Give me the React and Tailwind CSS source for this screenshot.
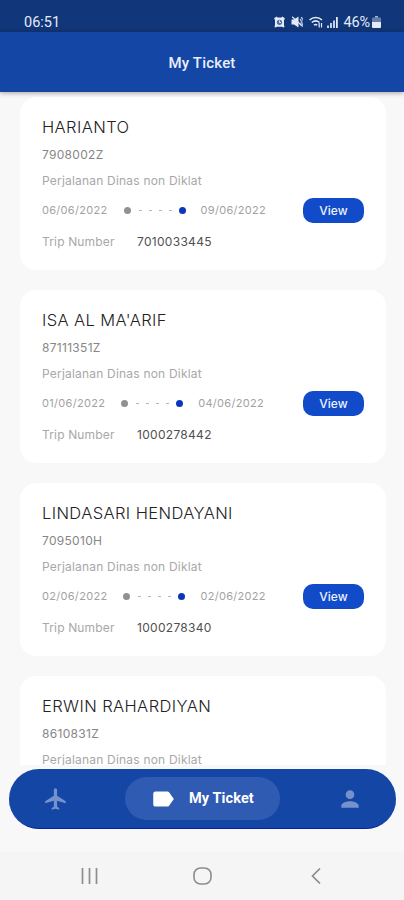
import { MdFlight, MdLabel, MdPerson } from 'react-icons/md';

const tickets = [
  {
    name: 'HARIANTO',
    employeeId: '7908002Z',
    from: '06/06/2022',
    to: '09/06/2022',
    tripNumber: '7010033445',
  },
  {
    name: "ISA AL MA'ARIF",
    employeeId: '87111351Z',
    from: '01/06/2022',
    to: '04/06/2022',
    tripNumber: '1000278442',
  },
  {
    name: 'LINDASARI HENDAYANI',
    employeeId: '7095010H',
    from: '02/06/2022',
    to: '02/06/2022',
    tripNumber: '1000278340',
  },
  {
    name: 'ERWIN RAHARDIYAN',
    employeeId: '8610831Z',
  },
];

const StatusBar = () => (
  <div className="flex h-8 shrink-0 items-end justify-between bg-[#113679] pr-[23px] pl-6 text-[#e4ebf7]">
    <span className="pt-px text-[14.5px] leading-[19px]">06:51</span>
    <div className="flex h-5 items-center">
      {/* Alarm */}
      <svg className="h-3 w-[11px]" viewBox="0 0 11 12" fill="currentColor">
        <path d="M0 2.500 2.500 0.500 3.500 1.500h4L8.500 0.500 11 2.500l-1 1.500v5l0.500 2-1 0.500-1.500-0.800H3l-1.500 0.800-1-0.500L1 9V4z" />
        <circle cx="5.500" cy="6.300" r="2.600" fill="#113679" fillOpacity="0.7" />
        <path d="M5.500 4.500v2h1.500" fill="none" stroke="currentColor" strokeWidth="1" />
      </svg>
      {/* Muted speaker */}
      <svg className="ml-[6px] h-3 w-3" viewBox="0 0 12 12" fill="currentColor">
        <path d="M0.500 3.500h2.500l4.500-3v11L3 8.500H0.500z" />
        <path d="M9 3a4 4 0 0 1 0 6M10.200 1.200a6 6 0 0 1 0.800 8" fill="none" stroke="currentColor" strokeWidth="1.200" opacity="0.85" />
        <path d="M1.200 0.800l10.500 9.700" stroke="currentColor" strokeWidth="1.200" />
      </svg>
      {/* Wi-Fi with traffic arrows */}
      <svg className="ml-[6px] h-3 w-[14px]" viewBox="0 0 14 12" fill="none" stroke="currentColor" strokeWidth="1.5">
        <path d="M0.500 4a9 9 0 0 1 12.500 0M2.800 6.500a6 6 0 0 1 7.700 0" />
        <path d="M5 9a3 3 0 0 1 3.200 0" />
        <path d="M10.200 7v4.500M12.500 7v4.500" strokeWidth="1.200" />
      </svg>
      {/* Signal */}
      <svg className="ml-1 h-3 w-[11px]" viewBox="0 0 11 12" fill="currentColor">
        <path d="M0 9.500h2V12H0zM3 7h2v5H3zM6 4.500h2V12H6z" opacity="0.85" />
        <path d="M9 1h1.800v11H9z" />
      </svg>
      <span className="ml-[5px] pt-px text-[14.5px] leading-[19px] tracking-[-0.1px]">46%</span>
      {/* Battery */}
      <svg className="ml-[2px] h-3 w-[9px]" viewBox="0 0 9 12" fill="currentColor">
        <path d="M3 0h3v1.500H3z" opacity="0.7" />
        <path d="M1 1.500h7a1 1 0 0 1 1 1V6H0V2.500a1 1 0 0 1 1-1z" opacity="0.4" />
        <path d="M0 6h9v5a1 1 0 0 1-1 1H1a1 1 0 0 1-1-1z" />
      </svg>
    </div>
  </div>
);

const Header = () => (
  <header className="relative z-10 flex h-[60px] shrink-0 items-center justify-center bg-[#1446a5] pt-[2px] shadow-[0_1px_5px_rgba(0,0,0,0.35)]">
    <h1 className="text-[15px] font-medium tracking-[0.2px] text-[#e9effa]">My Ticket</h1>
  </header>
);

const TripRange = ({ from, to }) => (
  <div className="flex items-center text-[11px] tracking-[0.3px] text-[#a2a2a2]">
    <span>{from}</span>
    <span className="ml-4 h-[7px] w-[7px] rounded-full bg-[#919191]" />
    <span className="ml-2 flex gap-[7px]">
      {[0, 1, 2, 3].map((dash) => (
        <span key={dash} className="h-px w-[3px] bg-[#b5b5b5]" />
      ))}
    </span>
    <span className="ml-[7px] h-[7px] w-[7px] rounded-full bg-[#0b35bd]" />
    <span className="ml-[15px]">{to}</span>
  </div>
);

const TicketCard = ({ ticket }) => (
  <article className="h-[173px] shrink-0 rounded-2xl bg-white pt-[18px] pr-[22px] pl-[22px]">
    <h2 className="text-[16.5px] leading-6 font-light tracking-[0.4px] text-[#222222]">{ticket.name}</h2>
    <p className="mt-[6px] text-[12px] leading-5 tracking-[0.3px] text-[#868686]">{ticket.employeeId}</p>
    <p className="mt-[6px] text-[12px] leading-5 tracking-[0.2px] text-[#a8a8a8]">Perjalanan Dinas non Diklat</p>
    {ticket.tripNumber && (
      <>
        <div className="mt-[7px] flex h-[25px] items-center justify-between">
          <TripRange from={ticket.from} to={ticket.to} />
          <button className="h-[25px] w-[61px] rounded-[10px] bg-[#114bc9] text-[12px] font-medium text-[#edf2fc]">
            View
          </button>
        </div>
        <div className="mt-[9px] flex text-[12px] leading-5">
          <span className="w-[95px] tracking-[0.15px] text-[#a8a8a8]">Trip Number</span>
          <span className="tracking-[0.3px] text-[#505050]">{ticket.tripNumber}</span>
        </div>
      </>
    )}
  </article>
);

const TabBar = () => (
  <nav className="mt-1 mr-2 ml-[9px] flex h-[60px] shrink-0 items-center justify-between rounded-full border-b border-[#0620a0] bg-[#1446a5] pr-[33px] pl-[34px]">
    <MdFlight className="h-[26px] w-[26px] text-[#7592cd]" />
    <div className="mr-[1px] flex h-[43px] w-[155px] items-center rounded-full bg-[#2f5bb2] pl-[25px] text-white">
      <MdLabel className="h-[26px] w-[26px]" />
      <span className="ml-[13px] pt-px text-[14.5px] font-bold tracking-[0.1px]">My Ticket</span>
    </div>
    <MdPerson className="h-[26px] w-[26px] text-[#7592cd]" />
  </nav>
);

const SystemNav = () => (
  <div className="mt-auto flex h-[48px] shrink-0 items-center bg-[#f5f5f5] pl-[81px] text-[#8d8d8d]">
    <svg className="h-4 w-[17px]" viewBox="0 0 17 16" stroke="currentColor" strokeWidth="1.7">
      <path d="M1.500 0v16M8.500 0v16M15.500 0v16" />
    </svg>
    <svg className="ml-[95px] h-[18px] w-[19px]" viewBox="0 0 19 18" fill="none" stroke="currentColor" strokeWidth="1.6">
      <rect x="1" y="1" width="17" height="16" rx="6.500" />
    </svg>
    <svg className="ml-[99px] h-4 w-[10px]" viewBox="0 0 10 16" fill="none" stroke="currentColor" strokeWidth="1.7">
      <path d="M9 0.500 1.500 8 9 15.500" />
    </svg>
  </div>
);

export default function App() {
  return (
    <div className="flex h-[900px] w-[404px] flex-col overflow-hidden bg-[#f8f8f8] font-['Roboto',sans-serif]">
      <StatusBar />
      <Header />
      <main className="flex h-[673px] shrink-0 flex-col gap-5 overflow-hidden pt-[5px] pr-[18px] pl-5 font-['Inter',sans-serif]">
        {tickets.map((ticket) => (
          <TicketCard key={ticket.employeeId} ticket={ticket} />
        ))}
      </main>
      <TabBar />
      <SystemNav />
    </div>
  );
}
